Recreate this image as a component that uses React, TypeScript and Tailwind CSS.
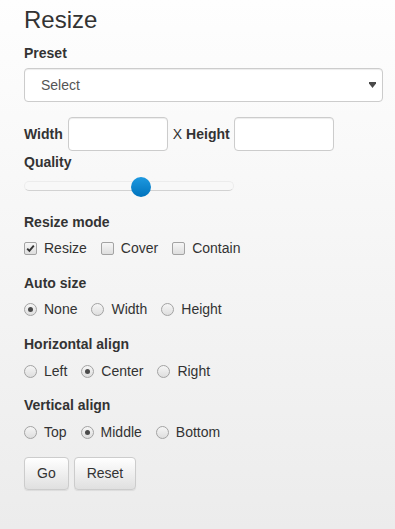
import React from "react";

function Check({ checked }: { checked?: boolean }) {
  return (
    <span className="relative inline-block w-[13px] h-[13px] shrink-0 rounded-[2px] border border-[#a3a3a3] bg-gradient-to-b from-[#f6f6f6] to-[#dedede]">
      {checked && (
        <svg viewBox="0 0 11 11" className="absolute left-0 top-0 w-[11px] h-[11px]">
          <path d="M2.2 5.6 L4.4 7.9 L8.8 2.6" stroke="#333" strokeWidth="1.9" fill="none" />
        </svg>
      )}
    </span>
  );
}

function Radio({ checked }: { checked?: boolean }) {
  return (
    <span className="inline-flex items-center justify-center w-[13px] h-[13px] shrink-0 rounded-full border border-[#a3a3a3] bg-gradient-to-b from-[#f6f6f6] to-[#dedede]">
      {checked && <span className="w-[5px] h-[5px] rounded-full bg-[#4a4a4a]" />}
    </span>
  );
}

function Label({ children, className = "" }: { children: React.ReactNode; className?: string }) {
  return <div className={`h-[20px] leading-[20px] text-[14px] font-bold text-[#333] ${className}`}>{children}</div>;
}

function OptRow({
  options,
  checked,
  kind,
  className = "",
}: {
  options: string[];
  checked: string;
  kind: "check" | "radio";
  className?: string;
}) {
  return (
    <div className={`flex items-center h-[20px] gap-[14px] text-[14px] leading-[20px] text-[#333] ${className}`}>
      {options.map((o) => (
        <label key={o} className="flex items-center gap-[7px]">
          {kind === "check" ? <Check checked={o === checked} /> : <Radio checked={o === checked} />}
          <span>{o}</span>
        </label>
      ))}
    </div>
  );
}

export default function App() {
  return (
    <div className="min-h-[529px] w-[395px] bg-gradient-to-b from-[#fefefe] to-[#ececec] pl-[24px] pr-[12px] pt-[6px] pb-[20px] font-['Liberation_Sans',Arial,sans-serif] text-[#333]">
      <h3 className="text-[24px] leading-[28px] font-normal text-[#333]">Resize</h3>

      <Label className="mt-[9px]">Preset</Label>
      <div className="mt-[5px] relative flex items-center h-[34px] w-full rounded-[4px] border border-[#ccc] bg-white pl-[16px] text-[14px] text-[#555] shadow-[inset_0_1px_1px_rgba(0,0,0,0.075)]">
        <span>Select</span>
        <svg viewBox="0 0 7 6" className="absolute right-[6px] top-[13px] w-[7px] h-[6px]">
          <path d="M0 0 L7 0 L7 1.5 L3.5 6 L0 1.5 Z" fill="#4a4a4a" />
        </svg>
      </div>

      <div className="mt-[15px] flex items-center h-[34px] text-[14px]">
        <span className="font-bold">Width</span>
        <div className="ml-[5px] w-[100px] h-[34px] rounded-[4px] border border-[#ccc] bg-white shadow-[inset_0_1px_1px_rgba(0,0,0,0.075)]" />
        <span className="ml-[5px]">X</span>
        <span className="ml-[4px] font-bold">Height</span>
        <div className="ml-[4px] w-[100px] h-[34px] rounded-[4px] border border-[#ccc] bg-white shadow-[inset_0_1px_1px_rgba(0,0,0,0.075)]" />
      </div>

      <Label className="mt-[1px]">Quality</Label>
      <div className="relative mt-[5px] w-[210px] h-[20px]">
        <div className="absolute left-0 right-0 top-[4px] h-[10px] rounded-full border border-[#ececec] border-b-[#d2d2d2] bg-[#f8f8f8]" />
        <div className="absolute left-[107px] top-0 w-[20px] h-[20px] rounded-full bg-gradient-to-b from-[#1d99e0] to-[#0073bd]" />
      </div>

      <Label className="mt-[15px]">Resize mode</Label>
      <OptRow className="mt-[6px]" kind="check" options={["Resize", "Cover", "Contain"]} checked="Resize" />

      <Label className="mt-[15px]">Auto size</Label>
      <OptRow className="mt-[6px]" kind="radio" options={["None", "Width", "Height"]} checked="None" />

      <Label className="mt-[15px]">Horizontal align</Label>
      <OptRow className="mt-[7px]" kind="radio" options={["Left", "Center", "Right"]} checked="Center" />

      <Label className="mt-[14px]">Vertical align</Label>
      <OptRow className="mt-[7px]" kind="radio" options={["Top", "Middle", "Bottom"]} checked="Middle" />

      <div className="mt-[15px] flex gap-[5px]">
        <button className="h-[33px] px-[12px] rounded-[4px] border border-[#ccc] bg-gradient-to-b from-white to-[#e0e0e0] text-[14px] text-[#333] shadow-[inset_0_1px_0_rgba(255,255,255,0.15),0_1px_1px_rgba(0,0,0,0.075)]">
          Go
        </button>
        <button className="h-[33px] px-[12px] rounded-[4px] border border-[#ccc] bg-gradient-to-b from-white to-[#e0e0e0] text-[14px] text-[#333] shadow-[inset_0_1px_0_rgba(255,255,255,0.15),0_1px_1px_rgba(0,0,0,0.075)]">
          Reset
        </button>
      </div>
    </div>
  );
}
